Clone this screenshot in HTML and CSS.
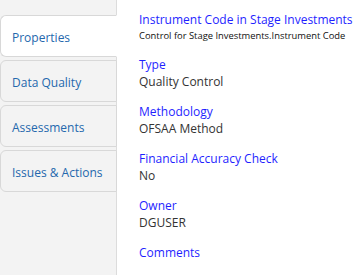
FILE: index.html
```html
<!DOCTYPE html>
<html lang="en">
<head>
  <meta charset="UTF-8" />
  <meta name="viewport" content="width=device-width, initial-scale=1.0" />
  <title>Control Properties</title>
  <link rel="stylesheet" href="styles.css">
</head>
<body>
  <div class="sidebar">
    <div class="tab active">Properties</div>
    <div class="tab">Data Quality</div>
    <div class="tab">Assessments</div>
    <div class="tab">Issues &amp; Actions</div>
  </div>

  <div class="details">
    <div class="group">
      <div class="label">Instrument Code in Stage Investments</div>
      <div class="sub">Control for Stage Investments.Instrument Code</div>
    </div>
    <div class="group">
      <div class="label">Type</div>
      <div class="value">Quality Control</div>
    </div>
    <div class="group">
      <div class="label">Methodology</div>
      <div class="value">OFSAA Method</div>
    </div>
    <div class="group">
      <div class="label">Financial Accuracy Check</div>
      <div class="value">No</div>
    </div>
    <div class="group">
      <div class="label">Owner</div>
      <div class="value">DGUSER</div>
    </div>
    <div class="group">
      <div class="label">Comments</div>
    </div>
  </div>
</body>
</html>
```

FILE: styles.css
```css
body {
  margin: 0;
  font-family: "Open Sans", Arial, sans-serif;
  font-size: 12px;
  display: flex;
  height: 275px;
  background-color: #fff;
  overflow: hidden;
}
.sidebar {
  width: 116px;
  flex-shrink: 0;
  background-color: #f3f3f3;
  border-right: 1px solid #dcdcdc;
  padding-top: 15px;
  display: flex;
  flex-direction: column;
  gap: 3px;
}
.tab {
  height: 40px;
  line-height: 43px;
  overflow: hidden;
  margin-right: -1px;
  padding-left: 11px;
  border: 1px solid #d8d8d8;
  border-radius: 6px 0 0 6px;
  background-color: #f3f3f3;
  color: #2468ad;
  white-space: nowrap;
}
.tab.active {
  background-color: #fff;
  border-right-color: #fff;
}
.details {
  padding: 11px 0 0 22px;
}
.group {
  margin-bottom: 13px;
}
.label {
  color: #1f1fff;
  line-height: 17px;
}
.value {
  color: #333;
  line-height: 17px;
}
.sub {
  color: #111;
  font-size: 9.4px;
  line-height: 15px;
}
```
